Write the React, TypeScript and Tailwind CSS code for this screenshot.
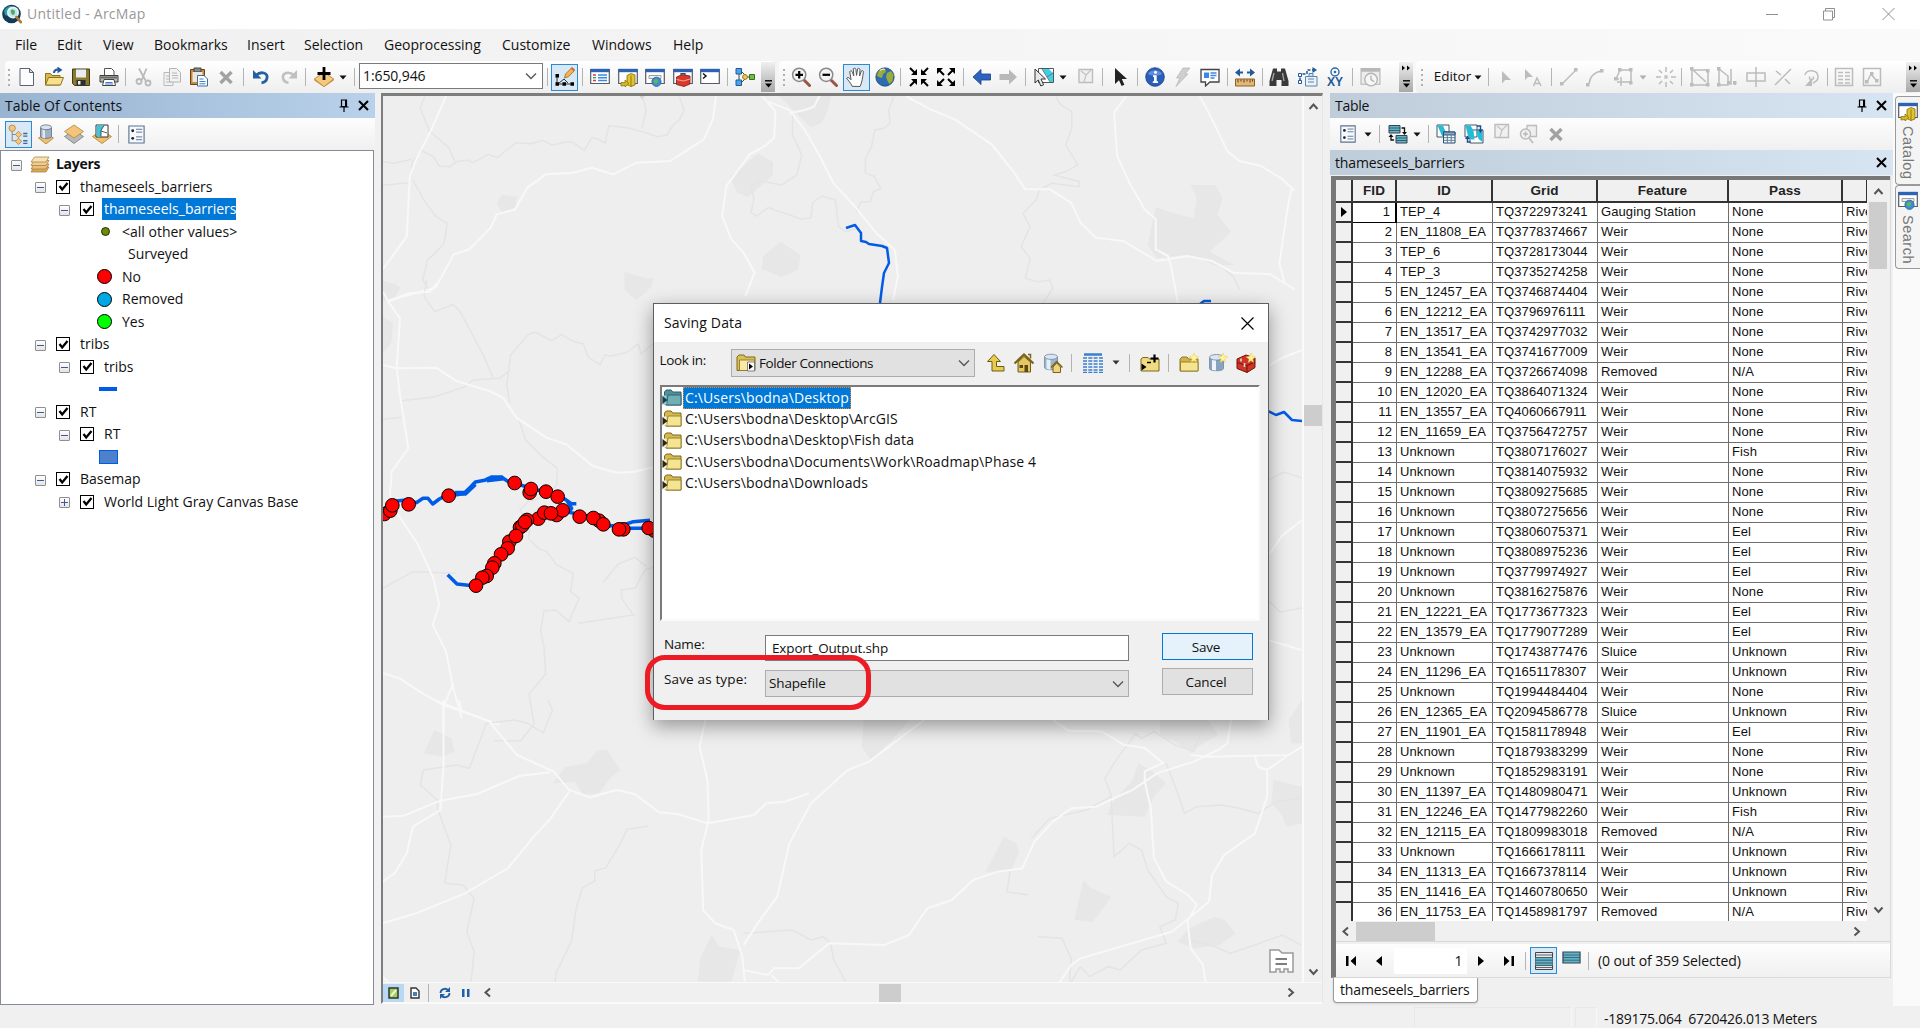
import React from "react";

/* ------------------------------------------------------------------ */
/* Layout helper: a row of items placed by their centre along the bar  */
/* ------------------------------------------------------------------ */

type Item = [centre: number, width: number, node: React.ReactNode];

function Strip({ start = 0, items, className = "" }: { start?: number; items: Item[]; className?: string }) {
  let cursor = start;
  return (
    <div className={"flex items-center " + className}>
      {items.map(([c, w, node], i) => {
        const ml = c - w / 2 - cursor;
        cursor = c + w / 2;
        return (
          <div key={i} className="flex shrink-0 items-center justify-center" style={{ width: w, marginLeft: ml }}>
            {node}
          </div>
        );
      })}
    </div>
  );
}

function Svg({ s = 20, children }: { s?: number; children: React.ReactNode }) {
  return (
    <svg width={s} height={s} viewBox="0 0 20 20" fill="none" className="block shrink-0">
      {children}
    </svg>
  );
}

const Sep = () => <div className="h-[18px] w-px bg-[#b4b4b4]" />;
const Grip = () => (
  <div className="flex flex-col gap-[3px]">
    {[0, 1, 2, 3].map((i) => (
      <div key={i} className="h-[2px] w-[2px] bg-[#b0b0b0]" />
    ))}
  </div>
);
const Caret = ({ c = "#111" }: { c?: string }) => (
  <svg width="8" height="5" viewBox="0 0 8 5" className="block">
    <path d="M0.5 0.5h7L4 4.5z" fill={c} />
  </svg>
);
const Overflow = ({ arrows = false }: { arrows?: boolean }) => (
  <div className="flex h-[30px] w-[14px] flex-col items-center justify-between bg-linear-to-b from-[#f0f0f0] to-[#a8a8a8] pt-[3px] pb-[4px]">
    <svg width="10" height="6" viewBox="0 0 10 6">
      {arrows && <path d="M1 0.5L4 3 1 5.5zM6 0.5L9 3 6 5.5z" fill="#000" />}
    </svg>
    <svg width="9" height="8" viewBox="0 0 9 8">
      <path d="M1 0.8h7" stroke="#000" strokeWidth="1.4" />
      <path d="M1 3.4h7L4.5 7.4z" fill="#000" />
    </svg>
  </div>
);
const Toggled = ({ children }: { children: React.ReactNode }) => (
  <div className="flex h-[27px] w-[27px] items-center justify-center border border-[#2a8ad4] bg-[#d9e8f5]">{children}</div>
);

/* ------------------------------ icons ------------------------------ */

const AppLogo = () => (
  <Svg>
    <circle cx="9.5" cy="10" r="9.3" fill="#123c56" />
    <path d="M2 7c2-4 5-5 7-5l3 2-4 3-2 5-3-1z" fill="#2f9aa8" />
    <circle cx="11" cy="8.6" r="5.2" fill="#bfe6ee" stroke="#e8f4f6" strokeWidth="1.6" />
    <path d="M9 6c2-1 4 0 4 2s-1 3-2 3-3-3-2-5z" fill="#58a85a" />
    <path d="M14.4 13l4.4 5.2" stroke="#b0773a" strokeWidth="2.6" strokeLinecap="round" />
  </Svg>
);
const NewDoc = () => (
  <Svg>
    <path d="M3 1.5h9.5l4 4V18.5H3z" fill="#fdfdff" stroke="#5b6270" />
    <path d="M12.5 1.5v4h4z" fill="#d8deea" stroke="#5b6270" />
  </Svg>
);
const OpenDoc = () => (
  <Svg>
    <path d="M1.5 18V6.5h5l1.5 2h8V18z" fill="#d8b84e" stroke="#8b7124" />
    <path d="M1.5 18l3-7.5H19.5L16.5 18z" fill="#f6e08a" stroke="#8b7124" />
    <path d="M10 6c0-2.5 1.5-3.5 4-3.5" stroke="#1d5a9e" strokeWidth="2" />
    <path d="M13.5 -0.5L18.5 3l-5 3.2z" fill="#1d5a9e" />
  </Svg>
);
const SaveIcon = () => (
  <Svg>
    <path d="M1.5 2h17v16.5H3.5l-2-2z" fill="#8b7a2e" stroke="#3f3a20" />
    <path d="M5 2.5h10v8H5z" fill="#e9edf2" />
    <path d="M5.5 13h9v5.5h-9z" fill="#2f2f2f" />
    <path d="M7 14h2.5v3.5H7z" fill="#eee" />
  </Svg>
);
const PrintIcon = () => (
  <Svg>
    <path d="M5.5 8V1.5h7l2.5 2.5V8" fill="#fff" stroke="#555" />
    <path d="M1 8.5h18V15H1z" fill="#b9b9b4" stroke="#3d3d3d" />
    <path d="M2 9.5h16v2H2z" fill="#6c6c68" />
    <path d="M5 12.5h10l1.5 6h-13z" fill="#fff" stroke="#444" />
    <path d="M6.5 15.5h7M6 17h8" stroke="#3a7fc4" />
  </Svg>
);
const Cut = () => (
  <Svg>
    <path d="M5 1.5l6.5 12M12.5 1.5l-5 12" stroke="#b9b9b9" strokeWidth="1.8" />
    <circle cx="5" cy="14.5" r="2.5" stroke="#b9b9b9" strokeWidth="1.8" />
    <circle cx="14" cy="16" r="2.5" stroke="#b9b9b9" strokeWidth="1.8" />
  </Svg>
);
const CopyIcon = () => (
  <Svg>
    <path d="M2 5.5h9v13H2z" fill="#f2f2f2" stroke="#b8b8b8" />
    <path d="M7.5 1.5h7l4 4V15h-11z" fill="#f2f2f2" stroke="#b4b4b4" />
    <path d="M10 6h5M10 8.5h6M10 11h6M4 9h3M4 12h3M4 15h5" stroke="#b8b8b8" />
  </Svg>
);
const Paste = () => (
  <Svg>
    <path d="M1.5 2.5h14v15h-14z" fill="#c98a3c" stroke="#6b4517" />
    <path d="M5 1h7v4H5z" fill="#888" stroke="#444" />
    <path d="M3.5 5h10v10h-10z" fill="#ece6dc" />
    <path d="M8.5 8.5h6.5l3.5 3.5v7h-10z" fill="#fff" stroke="#3a6ea5" />
    <path d="M10.5 12h4M10.5 14.5h6M10.5 16.8h6" stroke="#3a7fc4" />
  </Svg>
);
const Cross = () => (
  <Svg>
    <path d="M4.5 5l11 11M15.5 5L4.5 16" stroke="#a2a2a2" strokeWidth="3.4" />
  </Svg>
);
const Undo = () => (
  <Svg>
    <path d="M5 8.500C10 3.500 17 6 16 11c-.5 3-3 4.500-5.500 4.800" stroke="#2560a0" strokeWidth="2.800" />
    <path d="M2 3v8.500h8.500z" fill="#2560a0" />
  </Svg>
);
const Redo = () => (
  <Svg>
    <path d="M15 8.500C10 3.500 3 6 4 11c.5 3 3 4.500 5.500 4.800" stroke="#c0c0c0" strokeWidth="2.600" />
    <path d="M18 3v8.500H9.500z" fill="#c0c0c0" />
  </Svg>
);
const AddData = () => (
  <Svg>
    <path d="M10 5l9.700 7L10 19.700.3 12z" fill="#f5c87c" stroke="#a77b2d" strokeWidth=".8" />
    <path d="M.3 12L10 19.700 19.700 12v1.500L10 20 .3 13.500z" fill="#c48c3a" />
    <path d="M10 0v13M3.500 6.500h13" stroke="#000" strokeWidth="2.800" />
  </Svg>
);
const EditorTool = () => (
  <Svg>
    <path d="M2 8v9M2 17h15M4 16l5-4 4 4" stroke="#333" strokeWidth="1" />
    <path d="M0.500 7h3.500v3.500H0.500zM0.500 15.300H4v3.500H0.500zM7.500 15.300H11v3.500H7.500zM15.500 15.300H19v3.500h-3.500z" fill="#000" />
    <path d="M9.500 11l1-4 6-6 3 2.500-6 6.200z" fill="#f3b54c" stroke="#9b6a1c" strokeWidth=".8" />
    <path d="M15.500 1.500l1.500-1.500 3 2.500-1.500 1.500z" fill="#d8604f" />
  </Svg>
);
const Win = ({ children }: { children?: React.ReactNode }) => (
  <Svg>
    <path d="M0.700 2.500h18.600v14H0.700z" fill="#fff" stroke="#555c66" strokeWidth="1.200" />
    <path d="M0.500 1.800h19v3.400h-19z" fill="#2c63b4" />
    {children}
  </Svg>
);
const WinToc = () => (
  <Win>
    <path d="M3 8h3M3 13.500h3" stroke="#e33" strokeWidth="1.600" />
    <path d="M3 10.700h3" stroke="#2a7" strokeWidth="1.400" />
    <path d="M8 8h9M8 10.700h9M8 13.500h9" stroke="#3a8be0" strokeWidth="1.400" />
  </Win>
);
const WinCatalog = () => (
  <Win>
    <path d="M9 8.500l4-2 4 1.500v10l-4 1.500-4-2z" fill="#e3c32c" stroke="#7d6a0d" strokeWidth=".8" />
    <path d="M13 8.500v11" stroke="#7d6a0d" strokeWidth=".8" />
    <path d="M3 19v-3.500h4V13l4 3.500L7 20v-1.500z" fill="#d8b71c" stroke="#7d6a0d" strokeWidth=".7" />
  </Win>
);
const WinSearch = () => (
  <Win>
    <path d="M4 8.500h12v3H4z" fill="#eee" stroke="#888" strokeWidth=".8" />
    <circle cx="11.500" cy="14.800" r="4.600" fill="#3c8fd0" stroke="#1d5c94" strokeWidth=".8" />
    <path d="M9 13c2-2 4-1 4 .5s-1 3-2.500 3S8.500 15 9 13z" fill="#63b45a" />
  </Win>
);
const WinToolbox = () => (
  <Win>
    <path d="M3.500 10l6-2.500 7.500 1.500v8l-6 2.500-7.500-2z" fill="#d8392b" stroke="#7e1a12" strokeWidth=".8" />
    <path d="M3.500 12.500l7 1.500 6.500-2" stroke="#ffb0a4" strokeWidth=".9" />
    <path d="M8 8.500V6.500h4v2" stroke="#444" strokeWidth="1.200" />
  </Win>
);
const WinPython = () => (
  <Win>
    <path d="M3 6.500l3 2.500-3 2.500" stroke="#111" strokeWidth="1.500" />
  </Win>
);
const ModelBuilder = () => (
  <Svg>
    <path d="M4 4v12M6 4l6 6M6 16l6-6M10 10h6" stroke="#444" strokeWidth="1" />
    <path d="M1 1.500h5.500V7H1zM1 13h5.500v5.500H1z" fill="#4aa3e8" stroke="#1c5c9a" />
    <circle cx="10" cy="10" r="2.400" fill="#f3cc54" stroke="#9a7415" />
    <path d="M14.500 7.500h5v5h-5z" fill="#74b94c" stroke="#36701a" />
  </Svg>
);
const Zoomer = ({ plus = false }: { plus?: boolean }) => (
  <Svg>
    <path d="M13 13l5.500 5.500" stroke="#9c5544" strokeWidth="3" strokeLinecap="round" />
    <circle cx="8.200" cy="7.800" r="6.600" fill="#f4f4f4" stroke="#8b8b8b" strokeWidth="1.500" />
    <path d={plus ? "M4.500 7.800H12M8.200 4v7.600" : "M4.500 7.800H12"} stroke="#000" strokeWidth="2.200" />
  </Svg>
);
const Hand = () => (
  <Svg s={22}>
    <path
      d="M6.500 18.500c-1-3-3.500-5-5-7.500 1.200-1.200 2.500-.3 4 1.500L4.300 5c1.200-1 2-.5 2.400.6L8 9 7.500 2.500c1-1 2.200-.5 2.400.6L10.500 8.500l1-6c1-.8 2.100-.3 2.100.9l-.3 5.600 1.600-4.500c1.100-.7 2-.1 1.800 1.100-.6 4-1 8.900-3 13z"
      fill="#fff"
      stroke="#555"
      strokeWidth=".9"
    />
  </Svg>
);
const Globe = () => (
  <Svg>
    <circle cx="10" cy="10" r="9.200" fill="#2d6cb0" stroke="#1c3d66" strokeWidth=".7" />
    <path d="M3 5c2-3 5-3.500 7-3l1 3-3 2-1 4-3-1-2-1zM12 6l4-2 2.500 4-1 6-3 3-2-3-1.500-4z" fill="#9aad3a" />
    <path d="M5 3.500c2-1.500 4-1.500 5-1" stroke="#e8eec8" strokeWidth="1.200" />
  </Svg>
);
const ArrowsIn = () => (
  <Svg>
    <path d="M1 1l5 5M19 1l-5 5M1 19l5-5M19 19l-5-5" stroke="#000" strokeWidth="2" />
    <path d="M8 2v6H2zM12 2v6h6zM8 18v-6H2zM12 18v-6h6z" fill="#000" />
  </Svg>
);
const ArrowsOut = () => (
  <Svg>
    <path d="M3 3l5 5M17 3l-5 5M3 17l5-5M17 17l-5-5" stroke="#000" strokeWidth="2" />
    <path d="M1 1h6L1 7zM19 1h-6l6 6zM1 19h6L1 13zM19 19h-6l6-6z" fill="#000" />
  </Svg>
);
const BackArrow = () => (
  <Svg>
    <path d="M1 10l8-7.500V7h9.500v6H9v4.500z" fill="#2c62c0" stroke="#173d80" strokeWidth=".8" />
  </Svg>
);
const FwdArrow = () => (
  <Svg>
    <path d="M19 10l-8-7.500V7H1.500v6H11v4.500z" fill="#b9b9b9" />
  </Svg>
);
const SelectFeat = () => (
  <Svg>
    <path d="M4.500 1.500h15v14h-15z" fill="#fff" stroke="#555" />
    <path d="M8 2h7l4 4v9h-3z" fill="#3fd0e8" />
    <path d="M8 2l8 13M19 6l-6 4" stroke="#666" strokeWidth=".8" />
    <path d="M1 2v14l3.300-3 2.500 6 2.800-1.200L7 12h4.500z" fill="#e8e8e8" stroke="#333" />
  </Svg>
);
const ClearSel = () => (
  <Svg>
    <path d="M3 2.500h13.500v13H3z" fill="#f0f0f0" stroke="#bdbdbd" strokeWidth="1.400" />
    <path d="M5 4l5 4-2 7M10 8l5-5" stroke="#c4c4c4" strokeWidth="1.300" />
  </Svg>
);
const Pointer = () => (
  <Svg>
    <path d="M5 1v16l4-3.800 2.600 5.800 2.800-1.300L11.800 12H17z" fill="#222" />
  </Svg>
);
const Info = () => (
  <Svg>
    <circle cx="10" cy="10" r="9.300" fill="#2a5fb8" stroke="#17408a" strokeWidth=".8" />
    <path d="M3 7c2-5 12-5 14 0-4 2-10 2-14 0z" fill="#5f8fd8" />
    <circle cx="10.500" cy="5.300" r="1.500" fill="#fff" />
    <path d="M8 8.300h3.700v6h1.300V16H7.800v-1.700H9V10H8z" fill="#fff" />
  </Svg>
);
const Bolt = () => (
  <Svg>
    <path d="M11 1h7l-5 6h3L4 19.500l4-8.500H4.500z" fill="#cfcfcf" stroke="#b9b9b9" strokeWidth=".8" />
  </Svg>
);
const HtmlPopup = () => (
  <Svg>
    <path d="M1 2.500h18V15h-9l-4.500 4V15H1z" fill="#fff" stroke="#444" strokeWidth="1.300" />
    <path d="M4 5.500h5V11H4z" fill="#3a8be0" />
    <path d="M10.500 6h6M10.500 8.500h6M10.500 11h4" stroke="#3a8be0" strokeWidth="1.300" />
  </Svg>
);
const Measure = () => (
  <Svg>
    <path d="M0 5.500l5-4v3h3v2H5v3zM20 5.500l-5-4v3h-3v2h3v3z" fill="#205a9c" />
    <path d="M.5 12h19v7H.5z" fill="#e3b778" stroke="#8a6023" />
    <path d="M3 12.500v3M6 12.500v2M9 12.500v3M12 12.500v2M15 12.500v3M17.500 12.500v2" stroke="#5c3f14" />
  </Svg>
);
const Binoc = () => (
  <Svg>
    <path d="M4 1.500h4v3h4v-3h4L19.500 14v5h-7v-6h-5v6h-7v-5z" fill="#3a3a3a" />
    <path d="M5 6l-2 8M13.500 6l1.500 8" stroke="#a9a9a9" strokeWidth="1.300" />
  </Svg>
);
const RouteIcon = () => (
  <Svg>
    <path d="M2 13.500V7h7V3h6" stroke="#205a9c" strokeWidth="1.500" strokeDasharray="3 1.500" />
    <path d="M14.500 0l4.500 3-4.500 3z" fill="#205a9c" />
    <path d="M0.500 6.500h3v3h-3zM0.500 13.500h3v3h-3z" fill="#fff" stroke="#205a9c" />
    <path d="M7.500 9.500h11.500v9.500H7.500z" fill="#e9f2fb" stroke="#5b83ad" />
    <path d="M10 12h6M10 15h6" stroke="#5b83ad" />
    <path d="M11 6.500h4v3h-4z" fill="#cfe2f4" stroke="#5b83ad" />
  </Svg>
);
const GoXY = () => (
  <div className="flex h-5 flex-col items-center justify-between">
    <svg width="10" height="10" viewBox="0 0 10 10" fill="none">
      <circle cx="5" cy="5" r="4" stroke="#2a6aa8" strokeWidth="1.400" />
      <circle cx="5" cy="5" r="1.300" fill="#2a6aa8" />
    </svg>
    <span className="font-['Liberation_Sans'] text-[12px] leading-[10px] font-bold text-[#205a9c]">XY</span>
  </div>
);
const TimeIcon = () => (
  <Svg s={21}>
    <path d="M1 1.500h18v15H1z" fill="#ececec" stroke="#b3b3b3" />
    <path d="M1 1h18v3.500H1z" fill="#b8b8b8" />
    <circle cx="10.500" cy="12" r="6" fill="#f6f6f6" stroke="#b3b3b3" strokeWidth="1.300" />
    <path d="M10.500 8v4l3 2" stroke="#b3b3b3" strokeWidth="1.300" />
  </Svg>
);

const G = "#bcbcbc";
const Gray = ({ d, f }: { d?: string; f?: string }) => (
  <Svg>
    {d && <path d={d} stroke={G} strokeWidth="1.500" />}
    {f && <path d={f} fill={G} />}
  </Svg>
);
const sq = (x: number, y: number) => `M${x} ${y}h3.500v3.500h-3.500z`;

/* Table-of-contents toolbar icons */
const ListByOrder = () => (
  <Svg s={21}>
    <path d="M4 5v11h5M4 10h6" stroke="#8b8b8b" />
    <circle cx="4" cy="4" r="3" fill="#f3c77e" stroke="#b5843a" strokeWidth=".8" />
    <path d="M10 7l3 3-3 3-3-3zM10 13.500l3 3-3 3-3-3z" fill="#f3c77e" stroke="#b5843a" strokeWidth=".8" />
    <path d="M14.500 9h4M14.500 11.500h4M14.500 16h4M14.500 18.500h4" stroke="#3b6c94" strokeWidth="1.300" />
  </Svg>
);
const SourceIcon = () => (
  <Svg>
    <path d="M10 9.500l7.500 4.500-7.500 6-7.500-6z" fill="#f0bf6d" stroke="#ad7f35" strokeWidth=".8" />
    <path d="M4.500 3.500v9c0 2.600 11 2.600 11 0v-9" fill="#9fb0c4" stroke="#5f6f83" strokeWidth=".8" />
    <path d="M6.500 4.500v9.300l2.500.6V5z" fill="#dfe7f0" />
    <ellipse cx="10" cy="3.300" rx="5.500" ry="2.400" fill="#dbe3ec" stroke="#5f6f83" strokeWidth=".8" />
  </Svg>
);
const Visibility = () => (
  <Svg>
    <path d="M10 6.500l9.500 6L10 19.500.5 12.500z" fill="#b9b9b9" stroke="#777" strokeWidth=".8" />
    <path d="M10 1l9.500 6.500L10 14 .5 7.500z" fill="#f3c47a" stroke="#b5843a" strokeWidth=".8" />
  </Svg>
);
const SelectionIcon = () => (
  <Svg>
    <path d="M10 6.500l9.500 6L10 19.500.5 12.500z" fill="#f0bf6d" stroke="#ad7f35" strokeWidth=".8" />
    <path d="M4 1h12v12H4z" fill="#fff" stroke="#333" />
    <path d="M5 1.500h7l-3 5v6H5z" fill="#38c8dc" />
    <path d="M12 1.500l-3 5v6M9 7l6 2" stroke="#333" strokeWidth=".8" />
  </Svg>
);
const ListOptions = ({ s = 19 }: { s?: number }) => (
  <Svg s={s}>
    <path d="M2 1h16v18H2z" fill="#f5f8fc" stroke="#5c7390" strokeWidth="1.200" />
    <circle cx="6" cy="6" r="1.500" fill="#222" />
    <circle cx="6" cy="14" r="1.500" fill="#222" />
    <path d="M9.500 4.500H16M9.500 7.500H16M9.500 12.500H16M9.500 15.500H16" stroke="#5c7390" />
  </Svg>
);
const PinIcon = () => (
  <svg width="10" height="14" viewBox="0 0 10 14" fill="none">
    <path d="M2.500 1h5v6.500h-5zM0.500 8h9M5 8v5" stroke="#000" strokeWidth="1.200" />
    <path d="M6 1h1.800v6.500H6z" fill="#000" />
  </svg>
);
const CloseX = () => (
  <svg width="11" height="11" viewBox="0 0 11 11" fill="none">
    <path d="M1 1l9 9M10 1l-9 9" stroke="#000" strokeWidth="2" />
  </svg>
);
const LayersIcon = () => (
  <Svg>
    <path d="M4 13h15l-3 5H1z" fill="#d9a85a" stroke="#a3793a" strokeWidth=".7" />
    <path d="M4 10h15l-3 5H1z" fill="#e8c07a" stroke="#a3793a" strokeWidth=".7" />
    <path d="M4 6.500h15l-3 5H1z" fill="#efcd8f" stroke="#a3793a" strokeWidth=".7" />
    <path d="M4.500 3H19l-3 5H1z" fill="#f8e2b4" stroke="#a3793a" strokeWidth=".7" />
  </Svg>
);

/* Attribute table toolbar icons */
const RelatedTables = () => (
  <Svg>
    <path d="M1 1.500h11v7.500H1zM8 11.500h11V19H8z" fill="#5fb5c6" stroke="#345" />
    <path d="M1 4h11M1 6.500h11M8 14h11M8 16.500h11" stroke="#345" strokeWidth=".8" />
    <path d="M13.500 4h3v5M6 16H3v-4" stroke="#111" strokeWidth="1.300" />
    <path d="M14 8h5l-2.500 3zM0.500 13L3 10l2.500 3z" fill="#111" />
  </Svg>
);
const SelByAttr = () => (
  <Svg>
    <path d="M1 1h12v12H1z" fill="#fff" stroke="#456" />
    <path d="M1.500 1.500H7l2 5 3.500 2V12H6z" fill="#25bcd8" />
    <path d="M7.500 8h11.500v11H7.500z" fill="#fff" stroke="#234a70" />
    <path d="M7.500 8h11.500v3H7.500z" fill="#8ba8c4" stroke="#234a70" strokeWidth=".9" />
    <path d="M7.500 13.700H19M7.500 16.300H19M11.300 11v8M15.200 11v8" stroke="#4a6f94" strokeWidth=".9" />
  </Svg>
);
const SwitchSel = () => (
  <Svg>
    <path d="M1 1h12v12H1zM6 6h13v13H6z" fill="#fff" stroke="#456" />
    <path d="M1.500 1.500h5l3 5 1 9H7L4 12zM12 7l6.500-.5V18l-4-3z" fill="#25bcd8" />
    <path d="M13 2h3.500v4M6.500 18H3.500v-4" stroke="#1b4f8c" strokeWidth="1.500" />
    <path d="M14 5.500h5l-2.500 3.500zM1 15l2.500-3.500L6 15z" fill="#1b4f8c" />
  </Svg>
);
const ZoomSel = () => (
  <Svg>
    <path d="M9 1.500h9.500v11H9z" fill="#eee" stroke={G} strokeWidth="1.300" />
    <circle cx="7.500" cy="10" r="5" fill="#f2f2f2" stroke={G} strokeWidth="1.500" />
    <path d="M5 10h5M7.500 7.500v5M11 14l4 5" stroke={G} strokeWidth="1.700" />
  </Svg>
);

/* Dialog icons */
const Folder = ({ teal = false }: { teal?: boolean }) => (
  <svg width="20" height="17" viewBox="0 0 20 17" fill="none" className="block shrink-0">
    <path d="M2.500 15V3l1.700-2h5l1.500 2H19v13H4z" fill={teal ? "#4c919b" : "#d6b94e"} stroke={teal ? "#2c5f6e" : "#7c681e"} />
    <path d="M6 6h13v10H4.500z" fill={teal ? "#6faeb2" : "#f5e491"} stroke={teal ? "#2c5f6e" : "#8f7a2a"} strokeWidth=".9" />
    <path d="M0 6.500h4.500v9H0z" fill={teal ? "#9fcdd0" : "#f4f4ee"} />
    <path d="M0.500 7l5 4-5 4z" fill={teal ? "#1b3f50" : "#2d2608"} />
  </svg>
);
const ComboFolder = () => (
  <Svg>
    <path d="M1 17.500V4l2-2h5l1.500 2H19v13.500z" fill="#dcbf55" stroke="#7c681e" />
    <path d="M3.500 7h15v10.500h-15z" fill="#f8eaa4" stroke="#8f7a2a" strokeWidth=".9" />
    <path d="M11.500 9h7v9h-7z" fill="#fff" stroke="#666" strokeWidth=".8" />
    <path d="M13 10.500l4 3-4 3z" fill="#000" />
  </Svg>
);
const star = <path d="M15 0l1.300 3.200L19.700 4l-3 2 .8 3.500L15 7.500 12.300 9.500l.8-3.500-3-2 3.500-.8z" fill="#fff3a0" stroke="#e8c93c" strokeWidth=".5" />;
const UpLevel = () => (
  <Svg>
    <path d="M8 1.500l6.500 7h-4v5H18V18H6V8.500H1.500z" fill="#e8cc4e" stroke="#6f5c14" />
  </Svg>
);
const Home = () => (
  <Svg>
    <path d="M4 9v10h12.500V9L10 3.500z" fill="#e5c763" stroke="#6f5c14" />
    <path d="M0.500 10.500L10 1.500l9.500 9" stroke="#7a6419" strokeWidth="2.200" />
    <path d="M14 1.500h2.500v4" stroke="#7a6419" strokeWidth="1.500" />
    <path d="M10.500 12h3.500v7h-3.500zM5.500 12H9v3H5.500z" fill="#5a4a12" />
  </Svg>
);
const DbHome = () => (
  <Svg>
    <path d="M1.500 4v10.500c0 3 13 3 13 0V4" fill="#9db4cc" stroke="#72869c" strokeWidth=".8" />
    <path d="M3.500 5v11l4 .8V6z" fill="#e6eef6" />
    <ellipse cx="8" cy="3.800" rx="6.500" ry="2.600" fill="#dbe6f2" stroke="#72869c" strokeWidth=".8" />
    <path d="M10 14v5.500h7.500V14l-3.800-4z" fill="#efd37a" stroke="#7a6419" />
    <path d="M8 14.500l5.700-6 5.800 6" stroke="#7a6419" strokeWidth="1.500" />
  </Svg>
);
const GridView = () => (
  <Svg>
    <path d="M1 1.500h18" stroke="#3a7fd0" strokeWidth="2.500" />
    {[5, 8, 11, 14, 17, 19.5].map((y) => (
      <path key={y} d={`M0 ${y}h4M5.300 ${y}h4M10.600 ${y}h4M16 ${y}h4`} stroke="#3a7fd0" strokeWidth="1.400" />
    ))}
  </Svg>
);
const ConnectFolder = () => (
  <Svg>
    <path d="M1 18V6l2-1.500h5L9.500 6H19v12z" fill="#f0dc80" stroke="#7c681e" />
    <path d="M1.500 10.500l5 3.500-5 3.500z" fill="#000" />
    <path d="M14.500 1.500v8M10.500 5.500h8" stroke="#000" strokeWidth="2.200" />
    <path d="M7 9.500h4" stroke="#000" strokeWidth="1.500" />
  </Svg>
);
const NewFolder = () => (
  <Svg>
    <path d="M1 18V6l2-2h5l1.500 2H19v12z" fill="#d2b244" stroke="#8f7a2a" />
    <path d="M1.500 9H19v9H1.500z" fill="#f5e491" stroke="#8f7a2a" strokeWidth=".9" />
    {star}
  </Svg>
);
const NewDb = () => (
  <Svg>
    <path d="M1.500 4.500v11c0 3 14 3 14 0v-11" fill="#86a3c2" stroke="#72869c" strokeWidth=".8" />
    <path d="M4 5.500v11.500l4 .6V6.500z" fill="#eef4fa" />
    <ellipse cx="8.500" cy="4.300" rx="7" ry="2.800" fill="#dbe6f2" stroke="#72869c" strokeWidth=".8" />
    {star}
  </Svg>
);
const NewToolbox = () => (
  <Svg>
    <path d="M1 6l9-4 9 3v9.500L11 19.500 1 15.500z" fill="#cf3425" stroke="#6e150d" />
    <path d="M1 9.500l10 3 8-3.500M11 12.500v7" stroke="#7b1a10" strokeWidth="1.200" />
    <path d="M5 5.500v3M8.500 10v4" stroke="#ddd" strokeWidth="1.600" />
    {star}
  </Svg>
);

/* ------------------------------- data ------------------------------ */

const menus: [string, string][] = [
  ["File", "w-[42px]"],
  ["Edit", "w-[46px]"],
  ["View", "w-[51px]"],
  ["Bookmarks", "w-[93px]"],
  ["Insert", "w-[57px]"],
  ["Selection", "w-[80px]"],
  ["Geoprocessing", "w-[118px]"],
  ["Customize", "w-[90px]"],
  ["Windows", "w-[81px]"],
  ["Help", "w-[60px]"],
];

const rows = `TEP_4|TQ3722973241|Gauging Station|None
EN_11808_EA|TQ3778374667|Weir|None
TEP_6|TQ3728173044|Weir|None
TEP_3|TQ3735274258|Weir|None
EN_12457_EA|TQ3746874404|Weir|None
EN_12212_EA|TQ3796976111|Weir|None
EN_13517_EA|TQ3742977032|Weir|None
EN_13541_EA|TQ3741677009|Weir|None
EN_12288_EA|TQ3726674098|Removed|N/A
EN_12020_EA|TQ3864071324|Weir|None
EN_13557_EA|TQ4060667911|Weir|None
EN_11659_EA|TQ3756472757|Weir|None
Unknown|TQ3807176027|Weir|Fish
Unknown|TQ3814075932|Weir|None
Unknown|TQ3809275685|Weir|None
Unknown|TQ3807275656|Weir|None
Unknown|TQ3806075371|Weir|Eel
Unknown|TQ3808975236|Weir|Eel
Unknown|TQ3779974927|Weir|Eel
Unknown|TQ3816275876|Weir|None
EN_12221_EA|TQ1773677323|Weir|Eel
EN_13579_EA|TQ1779077289|Weir|Eel
Unknown|TQ1743877476|Sluice|Unknown
EN_11296_EA|TQ1651178307|Weir|Unknown
Unknown|TQ1994484404|Weir|None
EN_12365_EA|TQ2094586778|Sluice|Unknown
EN_11901_EA|TQ1581178948|Weir|Eel
Unknown|TQ1879383299|Weir|None
Unknown|TQ1852983191|Weir|None
EN_11397_EA|TQ1480980471|Weir|Unknown
EN_12246_EA|TQ1477982260|Weir|Fish
EN_12115_EA|TQ1809983018|Removed|N/A
Unknown|TQ1666178111|Weir|Unknown
EN_11313_EA|TQ1667378114|Weir|Unknown
EN_11416_EA|TQ1460780650|Weir|Unknown
EN_11753_EA|TQ1458981797|Removed|N/A`
  .split("\n")
  .map((r) => r.split("|"));

const folders = [
  "C:\\Users\\bodna\\Desktop",
  "C:\\Users\\bodna\\Desktop\\ArcGIS",
  "C:\\Users\\bodna\\Desktop\\Fish data",
  "C:\\Users\\bodna\\Documents\\Work\\Roadmap\\Phase 4",
  "C:\\Users\\bodna\\Downloads",
];

/* ----------------------------- main bars --------------------------- */

const ComboArrow = () => (
  <svg width="12" height="8" viewBox="0 0 12 8" fill="none">
    <path d="M1 1.500l5 5 5-5" stroke="#555" strokeWidth="1.300" />
  </svg>
);

function MainToolbar() {
  return (
    <div className="flex h-8 items-start bg-linear-to-r from-[#f0f0f0] to-[#fafafa]">
      <Strip
        start={5}
        className="ml-[5px] h-8 w-[770px] shrink-0 rounded-sm bg-linear-to-b from-white to-[#eeeeee]"
        items={[
          [9, 4, <Grip />],
          [27, 20, <NewDoc />],
          [53.5, 20, <OpenDoc />],
          [81, 20, <SaveIcon />],
          [108.5, 20, <PrintIcon />],
          [125.5, 1, <Sep />],
          [144, 20, <Cut />],
          [172, 20, <CopyIcon />],
          [199, 20, <Paste />],
          [226, 20, <Cross />],
          [243, 1, <Sep />],
          [260.5, 20, <Undo />],
          [289, 20, <Redo />],
          [305.5, 1, <Sep />],
          [323.5, 20, <AddData />],
          [343, 8, <Caret />],
          [354, 1, <Sep />],
          [
            451,
            184,
            <div className="-mt-[2px] flex h-[26px] w-full items-center justify-between border border-[#7a7a7a] bg-white pr-[5px] pl-[3px]">
              <span className="text-[14px] leading-none tracking-[-0.100px]">1:650,946</span>
              <ComboArrow />
            </div>,
          ],
          [547, 1, <Sep />],
          [564.5, 27, <Toggled><EditorTool /></Toggled>],
          [582, 1, <Sep />],
          [600, 20, <WinToc />],
          [628, 20, <WinCatalog />],
          [655, 20, <WinSearch />],
          [682.5, 20, <WinToolbox />],
          [710, 20, <WinPython />],
          [727, 1, <Sep />],
          [745, 20, <ModelBuilder />],
          [768, 14, <Overflow />],
        ]}
      />
      <Strip
        start={779}
        className="ml-1 h-8 w-[634px] shrink-0 rounded-sm bg-linear-to-b from-white to-[#eeeeee]"
        items={[
          [783.5, 4, <Grip />],
          [800.5, 20, <Zoomer plus />],
          [828, 20, <Zoomer />],
          [856, 27, <Toggled><Hand /></Toggled>],
          [884.500, 20, <Globe />],
          [900.5, 1, <Sep />],
          [919, 18, <ArrowsIn />],
          [946, 18, <ArrowsOut />],
          [963, 1, <Sep />],
          [982, 20, <BackArrow />],
          [1008, 18, <FwdArrow />],
          [1025.500, 1, <Sep />],
          [1044, 20, <SelectFeat />],
          [1063, 8, <Caret />],
          [1086, 20, <ClearSel />],
          [1102, 1, <Sep />],
          [1120, 20, <Pointer />],
          [1137, 1, <Sep />],
          [1154.500, 20, <Info />],
          [1182, 20, <Bolt />],
          [1209.500, 20, <HtmlPopup />],
          [1227, 1, <Sep />],
          [1245, 20, <Measure />],
          [1262, 1, <Sep />],
          [1279, 20, <Binoc />],
          [1308, 20, <RouteIcon />],
          [1335, 18, <GoXY />],
          [1352, 1, <Sep />],
          [1370, 20, <TimeIcon />],
          [1406, 14, <Overflow arrows />],
        ]}
      />
      <Strip
        start={1416}
        className="ml-[3px] h-8 w-[504px] shrink-0 rounded-sm bg-linear-to-b from-white to-[#eeeeee]"
        items={[
          [1422, 4, <Grip />],
          [1452.500, 42, <span className="text-[13.500px] tracking-[-0.050px]">Editor</span>],
          [1478, 8, <Caret />],
          [1488, 1, <Sep />],
          [1506, 20, <Gray f="M6 4v12.500l3.200-3.500H15z" />],
          [1533, 20, <Gray f="M2 2v11l3-3h5z" d="M10.500 19L14 11l4 8M12 16.500h4.500" />],
          [1551, 1, <Sep />],
          [1569, 20, <Gray d="M4 16L16 4" f={sq(1, 15) + sq(15, 1)} />],
          [1595, 20, <Gray d="M4 17C5 9 10 5 17 4" f={sq(1, 16) + sq(15, 2)} />],
          [1624, 20, <Gray d="M2 12L6 3h11v12H6M2 12h3M7 10v9M3 15h9" f={sq(0, 10) + sq(4, 1) + sq(15, 1) + sq(15, 14)} />],
          [1643, 8, <Caret c="#b0b0b0" />],
          [1666, 20, <Gray d="M10 0v5M10 15v5M0 10h5M15 10h5M3 3l3 3M14 14l3 3M17 3l-3 3M6 14l-3 3M8.500 8.500l3 3M11.500 8.500l-3 3" />],
          [1681.500, 1, <Sep />],
          [1700, 20, <Gray d="M2 2v16h16V4M3 3l13 12M4 3h12" f={sq(0, 0) + sq(0, 16) + sq(16, 16) + sq(16, 2)} />],
          [1727, 20, <Gray d="M2 18V2l9 7v9H3M14 2v16M18 16v2" f={sq(0, 0) + sq(0, 16) + sq(10, 14) + sq(16, 14)} />],
          [1756, 20, <Gray d="M1 6h18v8H1zM10 0v20" />],
          [1783, 20, <Gray d="M2 18L18 2M3 4l5 4M12 12l5 5" />],
          [1811, 20, <Gray d="M4 8c1-6 13-6 13 2 0 4-3 5-5 6M9 9.500a2 2 0 1 0 3 0" f="M11 11v8H4z" />],
          [1827, 1, <Sep />],
          [1844, 20, <Gray d="M1.500 1.500h17v17h-17zM4 5.500h5M4 9h5M4 12.500h5M4 16h5M11 5.500h5M11 9h5M11 12.500h5M11 16h5" />],
          [1872, 20, <Gray d="M1.500 1.500h17v17h-17zM5 15l4-8 5 6" f={sq(3, 13) + sq(8, 5) + sq(13, 12)} />],
          [1913, 14, <Overflow arrows />],
        ]}
      />
    </div>
  );
}

/* ------------------------- table of contents ----------------------- */

const Expander = ({ plus = false }: { plus?: boolean }) => (
  <div className="mt-[2px] flex h-[11px] w-[11px] shrink-0 items-center justify-center rounded-[1px] border border-[#8f8f8f] bg-linear-to-b from-white to-[#e4e4e4]">
    <svg width="7" height="7" viewBox="0 0 7 7">
      <path d={plus ? "M0 3.500h7M3.500 0v7" : "M0 3.500h7"} stroke="#3c5a9a" strokeWidth="1" />
    </svg>
  </div>
);
const Check = () => (
  <div className="flex h-[14px] w-[14px] shrink-0 items-center justify-center border border-black bg-white">
    <svg width="11" height="11" viewBox="0 0 11 11" fill="none">
      <path d="M1.500 5l2.700 3.500L9.500 2" stroke="#000" strokeWidth="2.300" />
    </svg>
  </div>
);

function Row({ pad, children }: { pad: string; children: React.ReactNode }) {
  return <div className={"flex h-[22.530px] items-center " + pad}>{children}</div>;
}
const Branch = ({ pad, label, plus }: { pad: string; label: string; plus?: boolean }) => (
  <Row pad={pad}>
    <Expander plus={plus} />
    <div className="ml-[10px]">
      <Check />
    </div>
    <span className="ml-[10px] whitespace-pre">{label}</span>
  </Row>
);
const Dot = ({ color, label }: { color: string; label: string }) => (
  <Row pad="pl-[96px]">
    <div className={"h-[15px] w-[15px] rounded-full border border-black " + color} />
    <span className="ml-[10px]">{label}</span>
  </Row>
);

function Toc() {
  return (
    <div className="flex w-[375px] shrink-0 flex-col">
      <Strip
        className="h-[25px] bg-linear-to-r from-[#99b4d1] to-[#b9d1ea]"
        items={[
          [66, 122, <span className="w-full whitespace-nowrap">Table Of Contents</span>],
          [344, 12, <PinIcon />],
          [363.500, 12, <CloseX />],
        ]}
      />
      <Strip
        className="h-8 bg-linear-to-b from-[#fdfdfd] to-[#f0f0f0]"
        items={[
          [18.500, 27, <Toggled><ListByOrder /></Toggled>],
          [46, 20, <SourceIcon />],
          [74, 20, <Visibility />],
          [101.500, 20, <SelectionIcon />],
          [118, 1, <Sep />],
          [136, 20, <ListOptions />],
        ]}
      />
      <div className="h-[855px] w-[374px] border border-[#868b96] bg-white pt-[2px]">
        <Row pad="pl-[10px]">
          <Expander />
          <div className="ml-[8px]">
            <LayersIcon />
          </div>
          <span className="ml-[6px] font-bold tracking-[-0.300px]">Layers</span>
        </Row>
        <Branch pad="pl-[34px]" label="thameseels_barriers" />
        <Row pad="pl-[58px]">
          <Expander />
          <div className="ml-[10px]">
            <Check />
          </div>
          <span className="ml-[8px] h-[22px] w-[134px] bg-[#0078d7] pl-[2px] leading-[21px] text-white">thameseels_barriers</span>
        </Row>
        <Row pad="pl-[100px]">
          <svg width="9" height="9" viewBox="0 0 9 9">
            <path d="M4.500 .5l3 1 1 3-1 3-3 1-3-1-1-3 1-3z" fill="#6b8e00" stroke="#1a2200" />
          </svg>
          <span className="ml-[12px]">&lt;all other values&gt;</span>
        </Row>
        <Row pad="pl-[127px]">Surveyed</Row>
        <Dot color="bg-[#ff0000]" label="No" />
        <Dot color="bg-[#00a9e6]" label="Removed" />
        <Dot color="bg-[#00ff00]" label="Yes" />
        <Branch pad="pl-[34px]" label="tribs" />
        <Branch pad="pl-[58px]" label="tribs" />
        <Row pad="pl-[98px]">
          <div className="h-[4px] w-[18px] bg-[#005ce6]" />
        </Row>
        <Branch pad="pl-[34px]" label="RT" />
        <Branch pad="pl-[58px]" label="RT" />
        <Row pad="pl-[98px]">
          <div className="h-[14px] w-[19px] border border-[#005ce6] bg-[#4e81cc]" />
        </Row>
        <Branch pad="pl-[34px]" label="Basemap" />
        <Branch pad="pl-[58px]" label="World Light Gray Canvas Base" plus />
      </div>
    </div>
  );
}

/* -------------------------------- map ------------------------------ */

const barriers = [
  [28, 702], [46, 692], [52, 676], [101, 673], [221, 647], [419, 609], [464, 638], [468, 627], [513, 635], [548, 650],
  [545, 705], [563, 691], [490, 716], [508, 698], [528, 700], [614, 710], [672, 722], [655, 714], [685, 733], [745, 748],
  [732, 748], [838, 752], [821, 744], [456, 720], [435, 742], [442, 737], [450, 726], [403, 785], [423, 768], [398, 805],
  [378, 823], [358, 850], [352, 863], [335, 888], [322, 893], [303, 917],
];

function MapCanvas() {
  const road = { stroke: "#f8f8f8", strokeWidth: 2, vectorEffect: "non-scaling-stroke" } as const;
  const line = { stroke: "#e4e4e4", strokeWidth: 1.500, vectorEffect: "non-scaling-stroke" } as const;
  const water = { stroke: "#005ce6", strokeWidth: 2.500, vectorEffect: "non-scaling-stroke", strokeLinejoin: "round" } as const;
  return (
    <svg width="919" height="886" viewBox="383 96 919 886" fill="none" className="block bg-[#eeeeee]">
      {/* northern part */}
      <g transform="translate(370 90) scale(0.61240 0.33333)">
        <g fill="#e7e7e7">
          <path d="M668 18h85l-5 40-10 40-18 14-18-30-20-40z" />
          <path d="M634 190l24 25v40l-18 30-22 35-18-10-12-50 20-30z" />
          <path d="M215 315l25 5-3 35-22 10-8-25z" />
          <path d="M670 455l34 40-6 45-26 22-32-25 2-38z" />
          <path d="M415 545l45 25-8 35-18 25-18-30z" />
          <path d="M20 570l30 20-8 30-22 15z" />
          <path d="M1283 350l20 15 42 20 5-60-10-40 40 0 12 40-8 50 22 50-35 60 40 40-20 0-60-30-45 10-16-40z" />
          <path d="M437 10h14l-6 20z" fill="#d0d0d8" />
        </g>
        <path {...line} d="M90 18l-8 35 15 70 32 50 10 45-8 12-18-2-10-30-18-15-15 30-5 65-45 8M20 215l20 5 28-12M70 270l18 60 20 50 18 20-5 60-15 30-12 20-8 60 10 30M140 215l20-5 8 8 25-25 15 10 30-45 25 3 20-10 15 15 20-10 12 0 20 25 12-38 10 4 12 12 6-52 30 6 25 12 25 15 15-5 10-30 10-15 8-30-8-40M445 20l6 40-7 55M690 75l0 60 15 60-8 60-25 30-35-12-15 15 5 40 -5 40 10 10 18-25 55 35 15-5 3-45 15-20 22 12 5 80 12 15 18-10M855 20l-8 40 2 40-10 15-15 5-5 50-10 35 0 45 15 10 10 35-12 10-5 30-15 0-8 30M1120 20l8 25 18 20 0 50-10 50 20 60-20 20-18 10 40 20 0 15-45-10-20 20-5 30-22 40 12 40-15 60 15 35-8 60 20 10 20-5 5 25-22 60M1350 500l40 30 20 30 10 40" />
        <path {...road} d="M125 15l-25 105-25 90-10 50-5 180-40 100M565 18l-5 70-15 60-25 30-30 35-55 5-38 35-35-20-30 15-45 5-30 40-20 65-30 15-10 40-35 65-25 15-30 100-80 40M640 18l22 45-2 80-15 25-25 25-18 45-20 50-7 90 15 70 20 40 18 60-15 70M650 35l35 25 25 60 25 80 22 80 35 70 35 80 30 50 5 80-8 70M685 70l25-10 15-10 10-35M875 18l40 40 40 30 60 75 35 80 20 55 40 0 35 40 15 60 25 45 45 10 55 60 50-15 40 15 35 35 60 5 40 45M1235 18l-20 50 5 130 20 80 25 80 18 30 0 90 20 20 5 30 12 120M1355 18l20 70 25 95 20 30 35 15 35 40 20 35M1505 290l-8 80-12 150 8 55" />
      </g>
      {/* western part */}
      <g transform="translate(375 280) scale(0.33333)">
        <path d="M24 30l40-25-10 40-20 20zM24 110l30 20-5 60-25 30z" fill="#e7e7e7" />
        <path d="M745 15l30-20 60 0-5 25-45 30z" fill="#e7e7e7" />
        <path {...line} d="M155 0l-8 50 32 45 55-22 20 20 70 130 30 70M80 362l100-12 90-30 25-20 80-5 30-25M437 190l25-28 20-5 48 25 30-18 35 20 30 8 15 40 35 22 15-30 15 5 50-12 35-25 8 30 35-30M437 190l-30 35-12 90 10 55M24 418l55-6M432 420l20 60 50 50 45 35-2 50-25 30-60 20-25 25 30 50-5 35 30 30 25 10 30 40 50 25-8 55 25 20-30 70-40-35-35 2-10 60 10 50 5 80-50 60 15 90-40 50-80 0M24 925l90-50 130 5M610 1030l165-25-35-50 0-25 40-5 30-55 25-8M815 860l-35-28-50 20-45 55" />
        <path {...road} d="M195 0l-30 35-65 5-60 25-16-30M40 65l35 50-10 150 10 80 25 160-50 70-5 70 25 60 60 90 45 100 18 80-20 60 40 80 22 110 25 90M24 255l40 10 120-2 60 40 100 30 40 20 40 60 90 60 60 20 80 65 70 20 50-2 90-20M24 1180l50 15 60 40 70 40 90 30 80 30M235 1210l-30 70 0 70" />
        <path
          d="M24 695l20-30 50-5 30 8 20-13h15l14 17 20-15 28-15 25 2 25-5 30-33 28-5 20-10h30l18 12 22 6 60 20 50 8 40 20 20 14h15M575 660l15 25-8 12 100 20M700 738l45-3 30-10 50-4M740 745h100"
          {...water}
          strokeWidth="3.500"
        />
        <path d="M240 640l30 0 30-28M335 600l50-6" {...water} strokeWidth="5" />
        <path d="M218 884l28 28 60 7" {...water} strokeWidth="3.500" />
        {barriers.map(([x, y], i) => (
          <circle key={i} cx={x} cy={y} r="20.500" fill="#ff0000" stroke="#000" strokeWidth="3" />
        ))}
      </g>
      {/* southern part */}
      <g transform="translate(370 700) scale(0.61240 0.33333)">
        <g fill="#e7e7e7">
          <path d="M105 90l28 25 5 40-20 15-30-10z" />
          <path d="M372 150l15 0 22 60-15 20-20 50-25 5-15-40-35 5 20-50 35-10z" />
          <path d="M808 20h90l-45 100-35 60-15-40z" />
          <path d="M1035 410l20 20 5 30-15 55-40 0z" />
          <path d="M1165 540l10 20 35 30-15 40-15 35-30-5z" />
          <path d="M1290 50l70-10 25 65-20 20-25 30-30-35-20-10z" />
          <path d="M1255 190l20 20 25 40-20 40-15 60-62-5 10-40 30-60z" />
          <path d="M1475 240l47 20v110l-25 10-10-40-15-30z" />
          <path d="M1500 60l22-60v130l-18 0z" />
          <path d="M558 705l12 35 35 10-15 95h-55l5-75z" />
          <path d="M1380 650l15 10 18 40-25 35-45 10-25-20 20-40z" />
        </g>
        <path {...line} d="M290 0l8 30-15 68-28-30-20-8-45 10-10 50-18 85-20-10-55 15-5 45 28 45 0 25 22 110-10 115 30 5 18 40-12 100 12 60-5 90M455 378l-35 10-15 55-20 60-18 10 0 30-20 20-10 60-8 100-25 95-2 30M1360 90l-15 65-30-20-35-40-20 20-10-15-15 40-15 35-20 60 10 50 5 185 25-40 20 20 10 60 30 80 20 20 -5 50-25 20 10 50-40 20-35 60-20-10-30 30-15-30-20 60M1045 515l-5 60 35 10M1300 190l15 70 15 80 20-20 40-5 30 10 30 15 30-35 40-10M1210 290l-40 40-60 25-30 60M610 700l80-10 30 30 20-10 12 20 5 50 20 65M1340 720l40 20 25 20 40-25 45-30 30 30M1090 710l40 5 15 60-3 70" />
        <path {...road} d="M105 0l90 65 45 100 60 50 25 55 35 22 42-22 30 12 40 55 30 5 50 28 75-25 20-35 30-5 40-25M20 350l35-3 60-45 60-20 70-55 50-10M145 0l5 30M120 0l0 200-5 130-45 50-10 80-20 60-20 25M325 275l-30 80-30 60-40 90-70 75-80 60-55 30M548 60l-10 80 13 100 2 120-12 90 3 180 20 40 30 20 14 80 4 75M905 60l-90 125-35 25-60 100-35 120-20 160-30 75-25 70M610 810l40 15 10-20 40 0 50-75 90 5 40-30 30-80 40-25 35-60 40-25 40-10 20-80 30-60 30-40 40-5 60-50 40-50 60-35 40-35 15-20 8-90M1115 60l25 32 55 2 35 40 35 10 30 45-30 25 0 30 10 80 5 150 20 70 35 40 15 30-15 50 5 80 20 50 10 120M1340 165l30 5 130-5 22-25M1500 165l-35 45 0 40 0 40-20 110-50 65-20 60-5 80-20 30-40 60-85 45-65 35-15 20-20 55M1445 170l5 30 15 10M20 830l10 16M655 825l12 20" />
      </g>
      <path d="M846 228l9-3 6 8v8l5 1 3 2 13 2 5 2 2 15-5 10-2 14-2 16M1200 304l4-3h7M1268 411l8 4 8-3 8 8 10 1" {...water} />
      <path d="M1268 366l14-8 20-8M1268 556l14-20 20-16M1268 640l34 10" {...road} />
      <path d="M1268 480l16-8 18 6M1268 600l12 12 22-4" {...line} />
      <path d="M1270 952v-2h9l3 3h11v19h-5v-3h-4v3h-4v-3h-4v3h-6z" fill="#fff" stroke="#9a9a9a" strokeWidth="1.500" />
      <path d="M1275.500 959h11.500M1275.500 964h11.500" stroke="#555" strokeWidth="1.500" />
    </svg>
  );
}

const Chevron = ({ dir }: { dir: "up" | "down" | "left" | "right" }) => {
  const d = { up: "M1.500 8L5.500 3.500 9.500 8", down: "M1.500 3.500L5.500 8l4-4.500", left: "M8 1.500L3.500 5.500 8 9.500", right: "M3.500 1.500L8 5.500 3.500 9.500" }[dir];
  return (
    <svg width="11" height="11" viewBox="0 0 11 11" fill="none">
      <path d={d} stroke="#555" strokeWidth="2" />
    </svg>
  );
};

function MapView() {
  return (
    <div className="flex h-[911px] w-[942px] shrink-0 flex-col border-t-[3px] border-r border-b-2 border-l-2 border-t-[#7d7d7d] border-r-[#e6e6e6] border-b-[#fafafa] border-l-[#7d7d7d]">
      <div className="flex h-[886px]">
        <MapCanvas />
        <div className="flex flex-1 flex-col items-center border-l-2 border-[#fafafa] bg-[#f0f0f0] pt-[5px]">
          <Chevron dir="up" />
          <div className="mt-[293px] h-[21px] w-[18px] bg-[#cdcdcd]" />
          <div className="mt-[540px]">
            <Chevron dir="down" />
          </div>
        </div>
      </div>
      <Strip
        start={383}
        className="h-[20px] border-t border-[#fafafa] bg-[#f0f0f0]"
        items={[
          [
            393.500,
            21,
            <div className="flex h-[18px] w-[21px] items-center justify-center bg-[#b9d9f3]">
              <svg width="11" height="12" viewBox="0 0 11 12">
                <path d="M1 1h9v10H1z" fill="#9fcf5f" stroke="#333" strokeWidth="1.500" />
                <path d="M3 9l5-6" stroke="#f4f4d0" strokeWidth="2" />
              </svg>
            </div>,
          ],
          [
            414.500,
            10,
            <svg width="10" height="12" viewBox="0 0 10 12" fill="none">
              <path d="M1 1h5l3 3v7H1z" fill="#fff" stroke="#333" strokeWidth="1.400" />
              <path d="M3 5h4v4H3z" fill="#4a7fb5" />
            </svg>,
          ],
          [428, 1, <Sep />],
          [
            444.500,
            12,
            <svg width="12" height="12" viewBox="0 0 12 12" fill="none">
              <path d="M1.500 6c0-4 5-5.500 7.500-3M10.500 6c0 4-5 5.500-7.500 3" stroke="#1f5fa8" strokeWidth="1.800" />
              <path d="M11 0v5H6zM1 12V7h5z" fill="#1f5fa8" />
            </svg>,
          ],
          [
            466,
            8,
            <svg width="8" height="10" viewBox="0 0 8 10">
              <path d="M0 1h2.500v8H0zM5 1h2.500v8H5z" fill="#1f5fa8" />
            </svg>,
          ],
          [487.500, 11, <Chevron dir="left" />],
          [889.500, 22, <div className="h-[18px] w-[22px] bg-[#cdcdcd]" />],
          [1290.500, 11, <Chevron dir="right" />],
        ]}
      />
    </div>
  );
}

/* ---------------------------- table panel -------------------------- */

const cols = "grid grid-cols-[17px_44px_96px_105px_131px_114px_25px]";

function AttributeTable() {
  return (
    <div className="flex w-[563px] shrink-0 flex-col">
      <Strip
        start={1330}
        className="h-[25px] bg-linear-to-r from-[#bfcddb] to-[#d7e4f2]"
        items={[
          [1355, 40, <span className="w-full tracking-[-0.300px]">Table</span>],
          [1862, 12, <PinIcon />],
          [1881, 12, <CloseX />],
        ]}
      />
      <Strip
        start={1330}
        className="h-8 bg-linear-to-b from-[#fdfdfd] to-[#f0f0f0]"
        items={[
          [1348, 18, <ListOptions s={18} />],
          [1368, 8, <Caret />],
          [1379.500, 1, <Sep />],
          [1397.500, 20, <RelatedTables />],
          [1417, 8, <Caret />],
          [1428.500, 1, <Sep />],
          [1446, 20, <SelByAttr />],
          [1474, 20, <SwitchSel />],
          [1502, 20, <div className="-mt-1"><ClearSel /></div>],
          [1528, 20, <ZoomSel />],
          [1556, 20, <Cross />],
        ]}
      />
      <Strip
        start={1330}
        className="h-[25px] bg-linear-to-r from-[#bfcddb] to-[#d7e4f2]"
        items={[
          [1402, 134, <span className="w-full pt-px tracking-[-0.150px]">thameseels_barriers</span>],
          [1881, 12, <CloseX />],
        ]}
      />
      <div className="mt-px ml-px h-[802px] w-[560px] border-r border-b border-l-[5px] border-r-[#dadada] border-b-[#dadada] border-l-[#777] bg-[#f0f0f0]">
        <div className="flex h-[745px] border-t-[4px] border-[#777]">
          <div className="h-[741px] w-[531px] overflow-hidden bg-white font-['Liberation_Sans'] text-[13px] tracking-[0.100px] text-[#111]">
            <div className={cols + " h-[23px] bg-[#f0f0f0] text-center text-[13.500px] leading-[21px] font-bold text-[#222]"}>
              {["", "FID", "ID", "Grid", "Feature", "Pass", ""].map((h, i) => (
                <div key={i} className="h-[23px] border-r-2 border-b-2 border-[#333]">
                  {h}
                </div>
              ))}
            </div>
            {rows.map((r, i) => (
              <div key={i} className={cols + " h-[20px] leading-[18px]"}>
                <div className="flex items-center justify-center border-r-2 border-b-2 border-[#333] bg-[#f0f0f0]">
                  {i === 0 && (
                    <svg width="6" height="10" viewBox="0 0 6 10">
                      <path d="M0 0l6 5-6 5z" />
                    </svg>
                  )}
                </div>
                <div className={"border-b text-right " + (i === 0 ? "border-r-2 border-black pr-[5px]" : "border-r border-[#6e6e6e] pr-[4px]")}>{i + 1}</div>
                {r.map((c, j) => (
                  <div key={j} className="overflow-hidden border-r border-b border-[#6e6e6e] pl-[3px] whitespace-nowrap">
                    {c}
                  </div>
                ))}
                <div className="overflow-hidden border-b border-[#6e6e6e] pl-[3px]">Rive</div>
              </div>
            ))}
          </div>
          <div className="ml-[1px] flex w-[20px] flex-col items-center bg-[#f0f0f0] pt-[6px]">
            <Chevron dir="up" />
            <div className="mt-[5px] h-[67px] w-[18px] bg-[#cdcdcd]" />
            <div className="mt-[635px]">
              <Chevron dir="down" />
            </div>
          </div>
        </div>
        <Strip
          start={1336}
          className="h-[21px] border-b border-[#d8d8d8]"
          items={[
            [1345, 11, <Chevron dir="left" />],
            [1395.500, 79, <div className="h-[19px] w-full bg-[#cdcdcd]" />],
            [1856, 11, <Chevron dir="right" />],
          ]}
        />
        <Strip
          start={1336}
          className="mt-[2px] h-[33px] bg-linear-to-b from-[#fdfdfd] to-[#f0f0f0]"
          items={[
            [1351.500, 11, <svg width="11" height="10" viewBox="0 0 11 10"><path d="M0 0h2.500v10H0zM10 0v10L4.500 5z" /></svg>],
            [1379, 6, <svg width="6" height="10" viewBox="0 0 6 10"><path d="M6 0v10L0 5z" /></svg>],
            [1430, 73, <div className="h-[26px] w-full bg-white pr-[4px] text-right leading-[26px]">1</div>],
            [1481, 6, <svg width="6" height="10" viewBox="0 0 6 10"><path d="M0 0v10l6-5z" /></svg>],
            [1508.500, 11, <svg width="11" height="10" viewBox="0 0 11 10"><path d="M11 0H8.500v10H11zM1 0v10l5.500-5z" /></svg>],
            [1525.500, 1, <Sep />],
            [
              1543.500,
              27,
              <Toggled>
                <Svg>
                  <path d="M1.500 1.500h17v17h-17z" fill="#e8e8e8" stroke="#444" />
                  <path d="M1.500 6.500h17v8h-17z" fill="#5fb5c6" />
                  <path d="M1.500 4h17M1.500 6.500h17M1.500 9.200h17M1.500 12h17M1.500 14.500h17M1.500 16.500h17" stroke="#345" strokeWidth=".8" />
                </Svg>
              </Toggled>,
            ],
            [
              1571,
              19,
              <div className="-mt-[6px]">
                <svg width="19" height="13" viewBox="0 0 20 13" preserveAspectRatio="none">
                  <path d="M1 1h18v11H1z" fill="#5fb5c6" stroke="#345" strokeWidth="1.200" />
                  <path d="M1 4h18M1 6.500h18M1 9.200h18" stroke="#345" strokeWidth=".7" />
                </svg>
              </div>,
            ],
            [1588, 1, <Sep />],
            [1671, 146, <span className="w-full whitespace-nowrap tracking-[-0.100px]">(0 out of 359 Selected)</span>],
          ]}
        />
      </div>
      <div className="ml-[3px] h-[25px] w-[145px] rounded-b-[4px] border border-t-0 border-[#999] bg-white pl-[6px] leading-[24px] tracking-[-0.150px] shadow-sm">
        thameseels_barriers
      </div>
    </div>
  );
}

function SideTabs() {
  return (
    <div className="flex w-[27px] shrink-0 flex-col bg-[#fafafa] pt-[3px] pl-[2px]">
      {[
        { label: "Catalog", icon: <WinCatalog />, h: "h-[89px]" },
        { label: "Search", icon: <WinSearch />, h: "h-[84px]" },
      ].map((t) => (
        <div key={t.label} className={"flex w-[25px] flex-col items-center rounded-l-[4px] border border-r-0 border-[#9a9a9a] bg-[#f4f4f4] pt-[4px] " + t.h}>
          {t.icon}
          <span className="mt-[5px] font-['Liberation_Sans'] text-[14.500px] leading-[14px] tracking-[0.500px] text-[#777] [writing-mode:vertical-rl]">{t.label}</span>
        </div>
      ))}
    </div>
  );
}

/* ------------------------------ dialog ----------------------------- */

function SaveDialog() {
  return (
    <div className="absolute top-[303px] left-[653px] flex h-[417px] w-[616px] flex-col border border-b-0 border-[#5e5e5e] bg-[#f0f0f0] text-[13.500px] tracking-[-0.150px] shadow-[0_6px_18px_rgba(0,0,0,0.38)]">
      <div className="flex h-[38px] items-center justify-between bg-white pr-[14px] pl-[10px]">
        <span className="text-[14px] tracking-[0.150px]">Saving Data</span>
        <svg width="13" height="13" viewBox="0 0 13 13" fill="none">
          <path d="M.5 .5l12 12M12.500 .5l-12 12" stroke="#000" strokeWidth="1.200" />
        </svg>
      </div>
      <Strip
        start={654}
        className="h-[41px]"
        items={[
          [684.500, 50, <span className="w-full pb-[3px] tracking-[-0.350px]">Look in:</span>],
          [
            853,
            244,
            <div className="mt-px flex h-[28px] w-full items-center border border-[#adadad] bg-[#e1e1e1] px-[4px]">
              <ComboFolder />
              <span className="ml-[3px] flex-1 pt-px tracking-[-0.420px]">Folder Connections</span>
              <ComboArrow />
            </div>,
          ],
          [996, 20, <UpLevel />],
          [1024, 20, <Home />],
          [1053, 20, <DbHome />],
          [1071.500, 1, <Sep />],
          [1093, 20, <GridView />],
          [1116, 8, <Caret c="#333" />],
          [1129, 1, <Sep />],
          [1149.500, 20, <ConnectFolder />],
          [1168, 1, <Sep />],
          [1189, 20, <NewFolder />],
          [1218, 20, <NewDb />],
          [1246, 20, <NewToolbox />],
        ]}
      />
      <div className="mt-[2px] ml-[6px] h-[236px] w-[600px] border-2 border-t-[#7a7a7a] border-r-[#fafafa] border-b-[#fafafa] border-l-[#7a7a7a] bg-white">
        {folders.map((f, i) => (
          <div key={f} className="flex h-[21.300px] items-center">
            <Folder teal={i === 0} />
            <span
              className={
                "ml-px flex h-[22px] items-center px-px text-[14px] tracking-[0.130px] whitespace-pre " +
                (i === 0 ? "border border-dotted border-[#e08a3a] bg-[#0078d7] text-white" : "border border-transparent")
              }
            >
              {f}
            </span>
          </div>
        ))}
      </div>
      <div className="mt-[12px] flex items-start">
        <span className="ml-[10px] w-[101px] leading-[22px]">Name:</span>
        <div className="mt-[2px] h-[26px] w-[364px] border border-[#7a7a7a] bg-white pl-[6px] leading-[24px]">Export_Output.shp</div>
        <div className="ml-[33px] h-[27px] w-[91px] border border-[#0078d7] bg-[#e5f1fb] pr-[3px] text-center leading-[26px]">Save</div>
      </div>
      <div className="mt-[7px] flex items-start">
        <span className="ml-[10px] w-[101px] leading-[22px] tracking-[0.150px]">Save as type:</span>
        <div className="mt-[2px] flex h-[27px] w-[364px] items-center justify-between border border-[#adadad] bg-[#e1e1e1] pr-[4px] pl-[3px]">
          <span>Shapefile</span>
          <ComboArrow />
        </div>
        <div className="ml-[33px] h-[27px] w-[91px] border border-[#adadad] bg-[#e1e1e1] pr-[3px] text-center leading-[26px]">Cancel</div>
      </div>
    </div>
  );
}

/* -------------------------------- app ------------------------------ */

export default function App() {
  return (
    <div className="relative flex h-[1028px] w-[1920px] flex-col overflow-hidden bg-[#f0f0f0] font-['Open_Sans',sans-serif] text-[14px] leading-none text-[#111]">
      <div className="flex h-[29px] shrink-0 items-center bg-white pb-px pl-[2px]">
        <AppLogo />
        <span className="ml-[5px] flex-1 tracking-[0.250px] text-[#999]">Untitled - ArcMap</span>
        <svg width="140" height="14" viewBox="0 0 140 14" fill="none" className="mr-[20px]">
          <path d="M6 7.500h12M63.500 4h9v9h-9zM65.500 4V1.500h9v9H72.500M122.500 1l12 12M134.500 1l-12 12" stroke="#8f8f8f" />
        </svg>
      </div>
      <div className="flex h-8 shrink-0 items-center bg-linear-to-r from-[#f0f0f0] to-[#fafafa] pl-[15px]">
        {menus.map(([m, w]) => (
          <span key={m} className={w}>
            {m}
          </span>
        ))}
      </div>
      <MainToolbar />
      <div className="flex h-[913px] shrink-0">
        <Toc />
        <div className="w-[6px] shrink-0" />
        <MapView />
        <div className="w-[7px] shrink-0" />
        <AttributeTable />
        <SideTabs />
      </div>
      <div className="flex h-[22px] items-center pl-[1414px]">
        <div className="h-[20px] w-[158px] border border-t-[#e8e8e8] border-r-[#f8f8f8] border-b-0 border-l-[#e8e8e8]" />
        <div className="ml-[3px] h-[20px] w-[22px] border border-t-[#e8e8e8] border-r-[#f8f8f8] border-b-0 border-l-[#e8e8e8]" />
        <span className="ml-[7px] pt-[4px] tracking-[-0.250px] whitespace-pre">-189175.064  6720426.013 Meters</span>
      </div>
      <SaveDialog />
      <div className="absolute top-[655px] left-[645px] h-[55px] w-[226px] rounded-[20px] border-[5px] border-[#ed1c24]" />
    </div>
  );
}
